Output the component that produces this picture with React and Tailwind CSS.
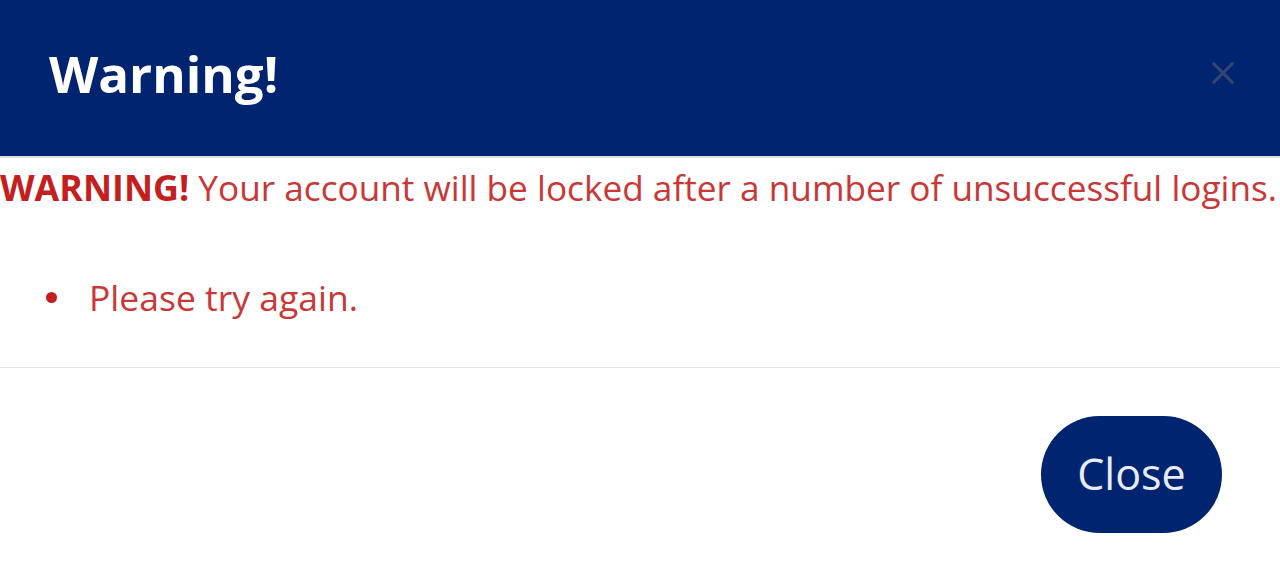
import React from 'react';

const App = () => {
    return (
        <div className="w-[1280px] h-[577px] bg-white overflow-hidden" style={{ fontFamily: '"Open Sans", "Noto Sans", sans-serif' }}>
            {/* Header */}
            <div className="h-[158px] bg-[#00246f] flex items-center justify-between pl-[49px] pr-[40px] border-b-2 border-[#d6dbe6]">
                <h1 className="text-white font-bold text-[51px] leading-none -mt-[10px]">Warning!</h1>
                <button className="w-[34px] h-[34px] flex items-center justify-center text-[#33466f] -mt-[10px]" title="Close">
                    <svg width="28" height="28" viewBox="0 0 24 24" fill="none" stroke="currentColor" strokeWidth="2.6" strokeLinecap="round">
                        <path d="M4 4L20 20M20 4L4 20" />
                    </svg>
                </button>
            </div>

            {/* Body */}
            <div className="h-[210px] border-b border-[#e6e6e6]">
                <p className="whitespace-nowrap text-[35.2px] leading-none text-[#c93737] pt-[12px]">
                    <span className="font-bold text-[#c41e1e] text-[35.8px]">WARNING!</span> Your account will be locked after a number of unsuccessful logins.
                </p>
                <ul className="mt-[74px] pl-[46px] text-[35.5px] leading-none text-[#c93737]">
                    <li className="flex items-center gap-[32px]">
                        <span className="w-[11px] h-[11px] rounded-full bg-[#c41e1e]"></span>
                        <span>Please try again.</span>
                    </li>
                </ul>
            </div>

            {/* Footer */}
            <div className="flex justify-end pr-[58px] pt-[48px]">
                <button className="w-[181px] h-[117px] rounded-full bg-[#00246f] text-[#e8ecf5] text-[43px]">
                    Close
                </button>
            </div>
        </div>
    );
};

export default App;
